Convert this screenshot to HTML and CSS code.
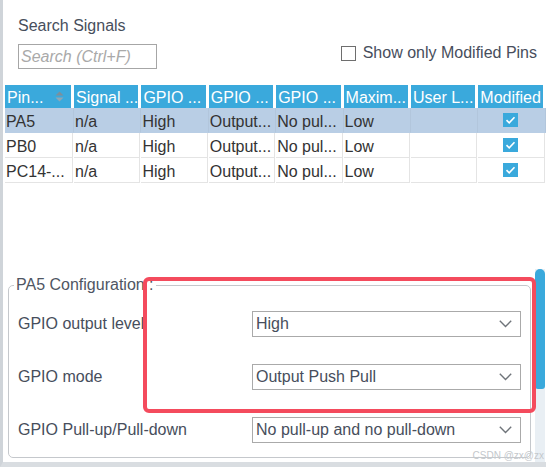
FILE: index.html
```html
<!DOCTYPE html>
<html>
<head>
<meta charset="utf-8">
<link rel="stylesheet" href="styles.css">
</head>
<body>
<div class="app">
  <div class="search">
    <div class="title">Search Signals</div>
    <div class="toolbar">
      <input class="search-input" type="text" placeholder="Search (Ctrl+F)">
      <label class="only-mod"><span class="box"></span>Show only Modified Pins</label>
    </div>
  </div>

  <div class="grid">
    <div class="hcell">Pin...<svg class="sort" width="9" height="11" viewBox="0 0 9 11"><path d="M0.5 4.5 L4.5 0.5 L8.5 4.5 Z" fill="#7c8f9c"/><path d="M0.5 6.5 L4.5 10.5 L8.5 6.5 Z" fill="#8fa6b4"/></svg></div>
    <div class="hcell">Signal ...</div>
    <div class="hcell">GPIO ...</div>
    <div class="hcell">GPIO ...</div>
    <div class="hcell">GPIO ...</div>
    <div class="hcell">Maxim...</div>
    <div class="hcell">User L...</div>
    <div class="hcell">Modified</div>

    <div class="row selected">
      <div class="cell">PA5</div><div class="cell">n/a</div><div class="cell">High</div><div class="cell">Output...</div><div class="cell">No pul...</div><div class="cell">Low</div><div class="cell"></div><div class="cell center"><span class="check"><svg width="15" height="14" viewBox="0 0 15 14"><path d="M3.5 7.2 L6.2 9.8 L11.5 4.2" stroke="#fff" stroke-width="1.6" fill="none"/></svg></span></div>
    </div>
    <div class="row">
      <div class="cell">PB0</div><div class="cell">n/a</div><div class="cell">High</div><div class="cell">Output...</div><div class="cell">No pul...</div><div class="cell">Low</div><div class="cell"></div><div class="cell center"><span class="check"><svg width="15" height="14" viewBox="0 0 15 14"><path d="M3.5 7.2 L6.2 9.8 L11.5 4.2" stroke="#fff" stroke-width="1.6" fill="none"/></svg></span></div>
    </div>
    <div class="row">
      <div class="cell">PC14-...</div><div class="cell">n/a</div><div class="cell">High</div><div class="cell">Output...</div><div class="cell">No pul...</div><div class="cell">Low</div><div class="cell"></div><div class="cell center"><span class="check"><svg width="15" height="14" viewBox="0 0 15 14"><path d="M3.5 7.2 L6.2 9.8 L11.5 4.2" stroke="#fff" stroke-width="1.6" fill="none"/></svg></span></div>
    </div>
  </div>

  <div class="config">
    <div class="config-body">
      <fieldset class="fs">
        <legend class="legend">PA5 Configuration :</legend>
        <div class="fields">
          <div class="field">
            <div class="label">GPIO output level</div>
            <div class="select"><span>High</span><svg width="13" height="8" viewBox="0 0 13 8"><path d="M0.8 0.8 L6.5 6.5 L12.2 0.8" stroke="#6f747a" stroke-width="1.4" fill="none"/></svg></div>
          </div>
          <div class="field">
            <div class="label">GPIO mode</div>
            <div class="select"><span>Output Push Pull</span><svg width="13" height="8" viewBox="0 0 13 8"><path d="M0.8 0.8 L6.5 6.5 L12.2 0.8" stroke="#6f747a" stroke-width="1.4" fill="none"/></svg></div>
          </div>
          <div class="field">
            <div class="label">GPIO Pull-up/Pull-down</div>
            <div class="select"><span>No pull-up and no pull-down</span><svg width="13" height="8" viewBox="0 0 13 8"><path d="M0.8 0.8 L6.5 6.5 L12.2 0.8" stroke="#6f747a" stroke-width="1.4" fill="none"/></svg></div>
          </div>
        </div>
      </fieldset>
    </div>
    <div class="scrollbar"><div class="thumb"></div></div>
  </div>

  <div class="highlight"></div>
  <div class="watermark">CSDN @zx@zx</div>
</div>
</body>
</html>
```
FILE: styles.css
```css
html, body {
  margin: 0;
  padding: 0;
  background: #ffffff;
}
body {
  font-family: "Liberation Sans", Arial, sans-serif;
  font-size: 16px;
  color: #474e5c;
}
.app {
  position: relative;
  width: 546px;
  height: 467px;
  box-sizing: border-box;
  border-left: 3px solid #cfd4d9;
  border-bottom: 5px solid #d9dde1;
  display: flex;
  flex-direction: column;
  overflow: hidden;
}
.search {
  padding: 16px 9px 0 15px;
}
.title {
  line-height: 20px;
  height: 20px;
}
.toolbar {
  margin-top: 8px;
  display: flex;
  justify-content: space-between;
  align-items: flex-start;
}
.search-input {
  box-sizing: border-box;
  width: 139px;
  height: 25px;
  margin: 0;
  border: 1px solid #a6a6a6;
  padding: 1px 0 0 2px;
  font-family: "Liberation Sans", Arial, sans-serif;
  font-size: 16px;
  font-style: italic;
  outline: none;
  border-radius: 0;
}
.search-input::placeholder {
  color: #a9a9a9;
}
.only-mod {
  display: flex;
  align-items: center;
  line-height: 20px;
  margin-top: -1px;
  gap: 7px;
}
.box {
  box-sizing: border-box;
  width: 15px;
  height: 15px;
  border: 1.5px solid #6e6e6e;
  background: #fff;
}
.grid {
  margin-top: 16px;
  margin-left: 2px;
  display: grid;
  grid-template-columns: 69px repeat(7, 67.4px);
  color: #333333;
}
.hcell {
  height: 23px;
  line-height: 25px;
  background: #3aa9dc;
  color: #ffffff;
  margin-right: 3px;
  padding-left: 2px;
  white-space: nowrap;
  overflow: hidden;
  position: relative;
}
.sort {
  position: absolute;
  left: 50px;
  top: 6px;
}
.row {
  display: contents;
}
.cell {
  box-sizing: border-box;
  height: 25px;
  line-height: 27px;
  padding-left: 1px;
  border-bottom: 1px solid #e4e4e4;
  border-right: 1px solid #e4e4e4;
  white-space: nowrap;
  overflow: hidden;
  margin-right: 1px;
}
.row.selected .cell {
  background: #b9cee5;
  border-right-color: #b2c6dc;
  border-bottom-color: #b9cee5;
  margin-right: 0;
  padding-right: 1px;
}
.center {
  display: flex;
  align-items: center;
  justify-content: center;
  padding-left: 0;
}
.check {
  width: 15px;
  height: 14px;
  background: #3aa9dc;
  display: flex;
  margin-right: 2px;
}
.config {
  margin-top: 86px;
  flex: 1;
  display: flex;
}
.config-body {
  flex: 1;
  padding: 6px 4px 0 5px;
}
.fs {
  margin: 0;
  border: 1px solid #c5c8cc;
  border-radius: 5px;
  padding: 16px 9px 14px 9px;
}
.legend {
  padding: 0 2px;
  margin-left: -4px;
  line-height: 20px;
  color: #4f5663;
}
.fields {
  display: flex;
  flex-direction: column;
  gap: 27px;
}
.field {
  display: grid;
  grid-template-columns: 1fr 269px;
  align-items: center;
}
.label {
  line-height: 20px;
  white-space: nowrap;
}
.select {
  box-sizing: border-box;
  height: 26px;
  border: 1px solid #aaaaaa;
  padding: 0 8px 0 3px;
  display: flex;
  align-items: center;
  justify-content: space-between;
  line-height: 24px;
  color: #474e5c;
}
.scrollbar {
  width: 10px;
  margin-right: 1px;
  background: #e9eff4;
}
.thumb {
  margin-top: 0;
  height: 120px;
  background: #3aa9dc;
  border-radius: 5px 5px 3px 3px;
}
.highlight {
  position: absolute;
  left: 140px;
  top: 277px;
  width: 393px;
  height: 136px;
  box-sizing: border-box;
  border: 4px solid #f44b5d;
  border-radius: 6px;
  pointer-events: none;
}
.watermark {
  position: absolute;
  right: 2px;
  top: 450px;
  font-size: 10px;
  line-height: 12px;
  color: #c4c8cc;
  white-space: nowrap;
}
```
